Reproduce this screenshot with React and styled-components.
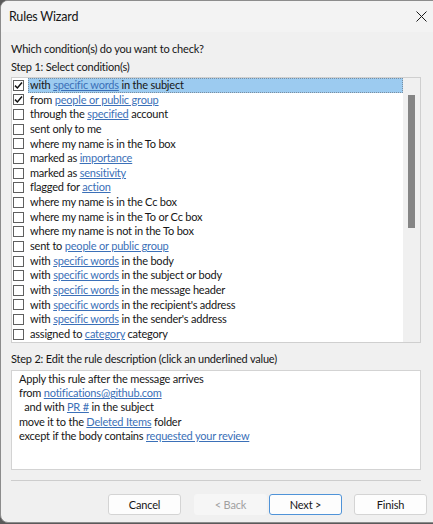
import React from "react";
import styled, { createGlobalStyle } from "styled-components";

const Global = createGlobalStyle`
  html, body { margin: 0; padding: 0; background: #5a5a5a; overflow: hidden; }
  body { font-family: "Lato", "Liberation Sans", sans-serif; }
`;

const FONT = `"Lato", "Liberation Sans", sans-serif`;

const Window = styled.div`
  width: 445px;
  height: 523px;
  box-sizing: border-box;
  border: 1px solid #8c8c8c;
  border-radius: 8px;
  background: #f0f0f0;
  display: flex;
  flex-direction: column;
  overflow: hidden;
  font-family: ${FONT};
  color: #161616;
  letter-spacing: -0.2px;
`;

const TitleBar = styled.div`
  height: 31px;
  display: flex;
  align-items: center;
  padding-left: 8px;
  background: #f3f3f3;
`;

const Title = styled.div`
  font-size: 12.5px;
  flex: 1;
`;

const CloseBtn = styled.div`
  width: 20px;
  height: 31px;
  display: flex;
  align-items: center;
  margin-right: 8px;
`;

const Content = styled.div`
  padding-left: 10px;
  width: 410px;
  display: flex;
  flex-direction: column;
`;

const Label = styled.div`
  font-size: 11px;
  line-height: 15px;
  margin-top: ${(p) => p.$mt}px;
`;

const ListBox = styled.div`
  margin-top: 3px;
  height: 266px;
  box-sizing: border-box;
  border: 1px solid #cfcfcf;
  background: #fff;
  display: flex;
`;

const Rows = styled.div`
  flex: 1;
  display: flex;
  flex-direction: column;
`;

const Row = styled.div`
  height: 14.65px;
  display: flex;
  align-items: center;
  font-size: 11px;
`;

const Box = styled.div`
  width: 11px;
  height: 11px;
  box-sizing: border-box;
  border: 1px solid #5f5f5f;
  background: #fff;
  margin-left: 1px;
  display: flex;
  align-items: center;
  justify-content: center;
  flex-shrink: 0;
`;

const RowText = styled.div`
  flex: 1;
  height: 100%;
  line-height: 12.65px;
  margin-left: 4px;
  padding-left: 1px;
  box-sizing: border-box;
  white-space: pre;
  overflow: hidden;
  background: ${(p) => (p.$sel ? "#9ccbf0" : "transparent")};
  border: 1px dotted ${(p) => (p.$sel ? "#7a8ea0" : "transparent")};
`;

const Link = styled.span`
  color: #3b70b8;
  text-decoration: underline;
  text-underline-offset: 1px;
`;

const Scrollbar = styled.div`
  width: 17px;
  background: #f0f0f0;
  padding-top: 17px;
  box-sizing: border-box;
`;

const Thumb = styled.div`
  margin-left: 5px;
  width: 7px;
  height: 133px;
  background: #858585;
`;

const DescBox = styled.div`
  margin-top: 4px;
  height: 100px;
  box-sizing: border-box;
  border: 1px solid #d3d3d3;
  background: #fff;
  padding: 1px 0 0 7px;
  font-size: 11px;
  line-height: 14.2px;
  white-space: pre;
`;

const Separator = styled.div`
  margin-top: 10px;
  height: 1px;
  background: #cdcdcd;
  width: 410px;
`;

const ButtonRow = styled.div`
  margin-top: 13px;
  display: flex;
  width: 416px;
  justify-content: flex-end;
`;

const Button = styled.div`
  width: 73px;
  height: 21px;
  box-sizing: border-box;
  border-radius: 3px;
  display: flex;
  align-items: center;
  justify-content: center;
  font-size: 11px;
  margin-left: ${(p) => p.$ml || 0}px;
  background: ${(p) => (p.$disabled ? "#f6f6f6" : "#fdfdfd")};
  color: ${(p) => (p.$disabled ? "#a0a0a0" : "#161616")};
  border: 1px solid
    ${(p) => (p.$primary ? "#4f93d8" : p.$disabled ? "#f6f6f6" : "#d4d4d4")};
`;

const Check = () => (
  <svg width="9" height="9" viewBox="0 0 9 9">
    <path d="M1 4.6 L3.4 7 L8 1.6" fill="none" stroke="#111" strokeWidth="1.5" />
  </svg>
);

const conditions = [
  { c: true, sel: true, t: ["with ", ["specific words"], " in the subject"] },
  { c: true, t: ["from ", ["people or public group"]] },
  { t: ["through the ", ["specified"], " account"] },
  { t: ["sent only to me"] },
  { t: ["where my name is in the To box"] },
  { t: ["marked as ", ["importance"]] },
  { t: ["marked as ", ["sensitivity"]] },
  { t: ["flagged for ", ["action"]] },
  { t: ["where my name is in the Cc box"] },
  { t: ["where my name is in the To or Cc box"] },
  { t: ["where my name is not in the To box"] },
  { t: ["sent to ", ["people or public group"]] },
  { t: ["with ", ["specific words"], " in the body"] },
  { t: ["with ", ["specific words"], " in the subject or body"] },
  { t: ["with ", ["specific words"], " in the message header"] },
  { t: ["with ", ["specific words"], " in the recipient's address"] },
  { t: ["with ", ["specific words"], " in the sender's address"] },
  { t: ["assigned to ", ["category"], " category"] },
];

const render = (parts) =>
  parts.map((p, i) =>
    Array.isArray(p) ? <Link key={i}>{p[0]}</Link> : <span key={i}>{p}</span>
  );

const desc = [
  ["Apply this rule after the message arrives"],
  ["from ", ["notifications@github.com"]],
  ["  and with ", ["PR #"], " in the subject"],
  ["move it to the ", ["Deleted Items"], " folder"],
  ["except if the body contains ", ["requested your review"]],
];

export default function App() {
  return (
    <>
      <Global />
      <Window>
        <TitleBar>
          <Title>Rules Wizard</Title>
          <CloseBtn>
            <svg width="11" height="11" viewBox="0 0 11 11">
              <path d="M0.5 0.5 L10.5 10.5 M10.5 0.5 L0.5 10.5" stroke="#1a1a1a" strokeWidth="1" />
            </svg>
          </CloseBtn>
        </TitleBar>
        <Content>
          <Label $mt={9}>Which condition(s) do you want to check?</Label>
          <Label $mt={3}>Step 1: Select condition(s)</Label>
          <ListBox>
            <Rows>
              {conditions.map((c, i) => (
                <Row key={i}>
                  <Box>{c.c && <Check />}</Box>
                  <RowText $sel={c.sel}>{render(c.t)}</RowText>
                </Row>
              ))}
            </Rows>
            <Scrollbar>
              <Thumb />
            </Scrollbar>
          </ListBox>
          <Label $mt={8}>Step 2: Edit the rule description (click an underlined value)</Label>
          <DescBox>
            {desc.map((d, i) => (
              <div key={i}>{render(d)}</div>
            ))}
          </DescBox>
          <Separator />
          <ButtonRow>
            <Button>Cancel</Button>
            <Button $disabled $ml={13}>&lt; Back</Button>
            <Button $primary $ml={2}>Next &gt;</Button>
            <Button $ml={12}>Finish</Button>
          </ButtonRow>
        </Content>
      </Window>
    </>
  );
}
